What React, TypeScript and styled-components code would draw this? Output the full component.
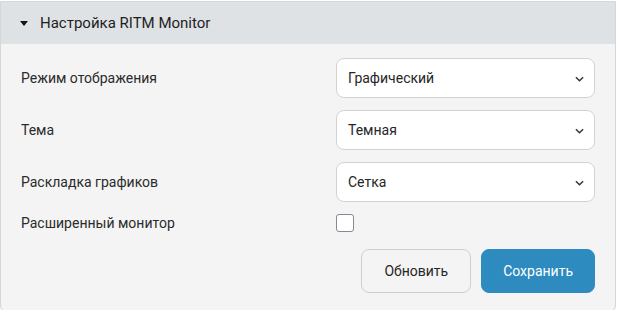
import React from "react";
import styled, { createGlobalStyle } from "styled-components";

const GlobalStyle = createGlobalStyle`
  html, body {
    margin: 0;
    padding: 0;
    background: #ffffff;
  }
  body {
    font-family: Roboto, "Liberation Sans", sans-serif;
    color: #212529;
  }
`;

const rows = [
  { label: "Режим отображения", value: "Графический", options: ["Графический", "Текстовый"] },
  { label: "Тема", value: "Темная", options: ["Темная", "Светлая"] },
  { label: "Раскладка графиков", value: "Сетка", options: ["Сетка", "Список"] },
];

const App = () => {
  return (
    <>
      <GlobalStyle />
      <Panel>
        <Header>
          <Caret />
          <Title>Настройка RITM Monitor</Title>
        </Header>
        <Body>
          <Form>
            {rows.map((r) => (
              <React.Fragment key={r.label}>
                <Label>{r.label}</Label>
                <SelectWrap>
                  <Select defaultValue={r.value}>
                    {r.options.map((o) => (
                      <option key={o}>{o}</option>
                    ))}
                  </Select>
                  <Chevron viewBox="0 0 10 6">
                    <path d="M1 1l4 4 4-4" fill="none" stroke="#333" strokeWidth="1.6" />
                  </Chevron>
                </SelectWrap>
              </React.Fragment>
            ))}
            <Label>Расширенный монитор</Label>
            <CheckCell>
              <Checkbox type="checkbox" />
            </CheckCell>
          </Form>
          <Actions>
            <Button>Обновить</Button>
            <Button $primary>Сохранить</Button>
          </Actions>
        </Body>
      </Panel>
    </>
  );
};

export default App;

const Panel = styled.div`
  width: 614px;
  margin-top: 1px;
  border: 1px solid #d4d6d8;
  border-radius: 0 0 6px 6px;
  background: #f4f4f4;
  overflow: hidden;
`;

const Header = styled.div`
  display: flex;
  align-items: center;
  gap: 12px;
  height: 42px;
  padding-left: 19px;
  background: #dee2e5;
`;

const Caret = styled.span`
  width: 0;
  height: 0;
  border-left: 4.5px solid transparent;
  border-right: 4.5px solid transparent;
  border-top: 5px solid #111;
  margin-top: 1px;
`;

const Title = styled.span`
  font-size: 15px;
  color: #1e1e1e;
`;

const Body = styled.div`
  padding: 14px 20px 18px 20px;
`;

const Form = styled.div`
  display: grid;
  grid-template-columns: 315px 1fr;
  row-gap: 12px;
  align-items: center;
`;

const Label = styled.div`
  font-size: 14px;
  color: #2b2b2b;
`;

const SelectWrap = styled.div`
  position: relative;
`;

const Select = styled.select`
  appearance: none;
  width: 100%;
  height: 40px;
  padding: 0 30px 0 11px;
  border: 1px solid #d2d2d2;
  border-radius: 8px;
  background: #ffffff;
  font-family: Roboto, "Liberation Sans", sans-serif;
  font-size: 14px;
  color: #262626;
  outline: none;
`;

const Chevron = styled.svg`
  position: absolute;
  right: 11px;
  top: 18px;
  width: 9px;
  height: 6px;
  pointer-events: none;
`;

const CheckCell = styled.div`
  display: flex;
  align-items: center;
  height: 18px;
`;

const Checkbox = styled.input`
  appearance: none;
  margin: 0;
  width: 18px;
  height: 18px;
  border: 1.5px solid #8a8696;
  border-radius: 3px;
  background: #ffffff;
`;

const Actions = styled.div`
  display: flex;
  justify-content: flex-end;
  gap: 10px;
  margin-top: 17px;
`;

const Button = styled.button<{ $primary?: boolean }>`
  height: 44px;
  padding: 0 ${(p) => (p.$primary ? "21px" : "22px")};
  border-radius: 8px;
  border: 1px solid ${(p) => (p.$primary ? "#2d8bc0" : "#cfcfcf")};
  background: ${(p) => (p.$primary ? "#2d8bc0" : "#f4f4f4")};
  color: ${(p) => (p.$primary ? "#ffffff" : "#262626")};
  font-family: Roboto, "Liberation Sans", sans-serif;
  font-size: 14px;
  cursor: pointer;
`;
